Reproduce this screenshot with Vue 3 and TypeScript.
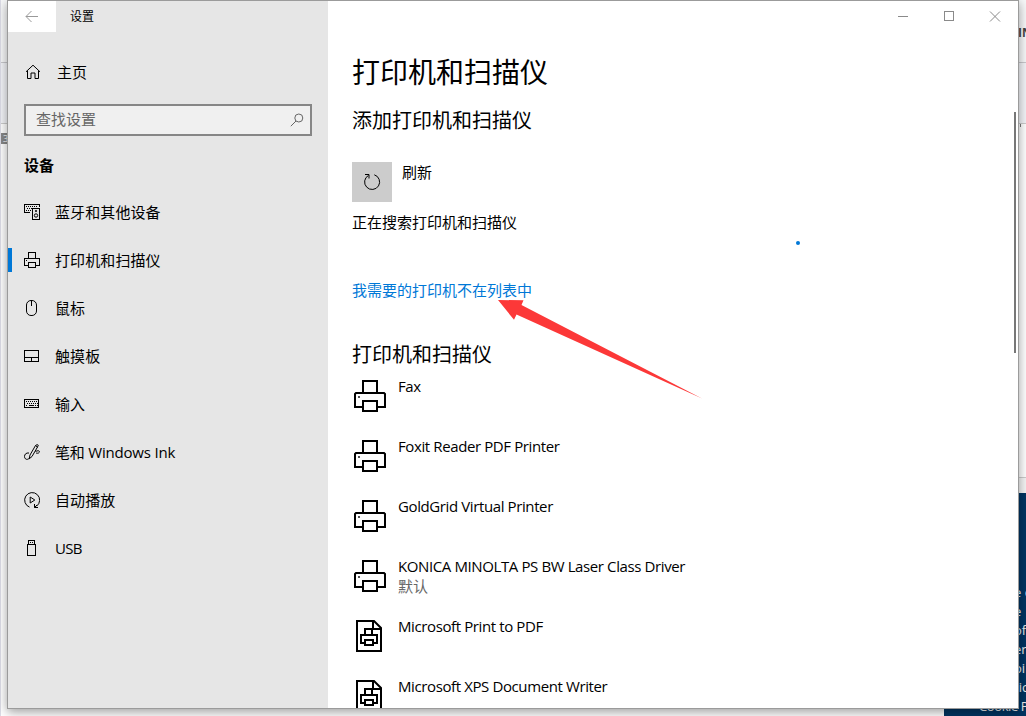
<script setup lang="ts">
interface NavItem {
  id: string
  label: string
  active?: boolean
}
interface Printer {
  name: string
  kind: 'device' | 'document'
  status?: string
}

const navItems: NavItem[] = [
  { id: 'devices', label: '蓝牙和其他设备' },
  { id: 'printer', label: '打印机和扫描仪', active: true },
  { id: 'mouse', label: '鼠标' },
  { id: 'touchpad', label: '触摸板' },
  { id: 'typing', label: '输入' },
  { id: 'pen', label: '笔和 Windows Ink' },
  { id: 'autoplay', label: '自动播放' },
  { id: 'usb', label: 'USB' },
]

const printers: Printer[] = [
  { name: 'Fax', kind: 'device' },
  { name: 'Foxit Reader PDF Printer', kind: 'device' },
  { name: 'GoldGrid Virtual Printer', kind: 'device' },
  { name: 'KONICA MINOLTA PS BW Laser Class Driver', kind: 'device', status: '默认' },
  { name: 'Microsoft Print to PDF', kind: 'document' },
  { name: 'Microsoft XPS Document Writer', kind: 'document' },
]

const footerLines: string[] = ['e c', 'e', 'of', 'er', 'oi', 'tic']
</script>

<template>
  <div class="desktop">
    <div class="page">
      <div class="page-head"><span>IN</span></div>
      <div class="page-sub"></div>
      <div class="page-body"><span class="tag">3</span><span class="tick"></span></div>
      <div class="page-band"></div>
      <div class="page-bottom">
        <div class="footer">
          <div v-for="line in footerLines" :key="line" class="footer-line">{{ line }}</div>
          <div class="footer-line cookie">Cookie P</div>
        </div>
      </div>
    </div>

    <div class="window">
      <aside class="sidebar">
        <header class="side-title">
          <div class="back">
            <svg width="14" height="14" viewBox="0 0 14 14"><path d="M1 6.500h12M6.500 1 1 6.500 6.500 12" /></svg>
          </div>
          <span>设置</span>
        </header>
        <div class="home">
          <svg width="16" height="16" viewBox="0 0 16 16"><path d="M1 7.800 8 1.200l7 6.600M2.500 6.800v7.700h3.500V9h4v5.500h3.500V6.800" /></svg>
          <span>主页</span>
        </div>
        <div class="search">
          <span>查找设置</span>
          <svg width="14" height="14" viewBox="0 0 14 14"><circle cx="8.800" cy="5" r="4" /><path d="M6 8 .8 13.200" /></svg>
        </div>
        <h3>设备</h3>
        <nav>
          <div v-for="item in navItems" :key="item.id" class="nav-item" :class="{ active: item.active }">
            <svg width="16" height="16" viewBox="0 0 16 16">
              <template v-if="item.id === 'devices'">
                <path class="crisp" d="M6 8.500H.5v-8h15V3M8.500 4.500h7v11h-7z" />
                <path class="crisp" stroke-dasharray="1 1" d="M2 2.500h12M3 4.500h5M2 6.500h5" />
                <circle cx="12" cy="11.500" r="1.700" /><circle cx="12" cy="7" r=".7" />
              </template>
              <template v-else-if="item.id === 'printer'">
                <path class="crisp" d="M4.500 6V.5h7V6M4 13.500H.5v-7h15v7H12M4.500 10.500h7v5h-7z" />
                <path class="crisp" d="M2 8.500h1" />
              </template>
              <template v-else-if="item.id === 'mouse'">
                <rect x="2.500" y=".5" width="10" height="15" rx="4.500" /><path d="M7.500 1v5" />
              </template>
              <template v-else-if="item.id === 'touchpad'">
                <path class="crisp" d="M.5 2.500h14v11H.5zM.5 9.500h14M7.500 9.500v4" />
              </template>
              <template v-else-if="item.id === 'typing'">
                <path class="crisp" d="M.5 3.500h14v8H.5z" />
                <path class="crisp" stroke-dasharray="1 1" d="M2 5.500h12M3 7.500h11M2 9.500h2M11 9.500h3" />
                <path class="crisp" d="M5 9.500h5" />
              </template>
              <template v-else-if="item.id === 'pen'">
                <path d="M5.200 14.800 6 11 11.500 1.500Q13.500-.2 14.300 1.200L13.500 3 8 12.500zM11.500 1.500l2 1.700M5 9C2 8.500.5 10.500.5 12.500c0 2 1.500 3.200 3 2.800 1-.3 1.700-1 1.700-1M11.500 7.500c3-1.500 4.500-.5 3.800.8-.7 1.200-2.300 1-3.300.7" />
              </template>
              <template v-else-if="item.id === 'autoplay'">
                <path d="M5.500 15.100A7.500 7.500 0 1 1 12.500 14.200M10.500 12v3.500H14M10.500 15.500 13 13" />
                <path d="M6.200 5v6l4.600-3z" />
              </template>
              <template v-else>
                <path class="crisp" d="M4.500 4.500v-4h6v4M3.500 4.500h8v11h-8zM6 2.500h1M8 2.500h1" />
              </template>
            </svg>
            <span>{{ item.label }}</span>
          </div>
        </nav>
      </aside>

      <main>
        <div class="controls">
          <svg width="102" height="11" viewBox="0 0 102 11">
            <path class="crisp" d="M0 5.500h10M46.500.5h9v9h-9z" />
            <path d="m92 .5 10 10m0-10-10 10" />
          </svg>
        </div>
        <h1>打印机和扫描仪</h1>
        <h2>添加打印机和扫描仪</h2>
        <div class="refresh">
          <div class="refresh-button">
            <svg width="18" height="18" viewBox="0 0 18 18"><path d="M11.300 1.800A7.500 7.500 0 1 1 5.500 2.400M2 1.500h4v4" /></svg>
          </div>
          <span>刷新</span>
        </div>
        <div class="searching">正在搜索打印机和扫描仪<i class="progress-dot"></i></div>
        <a class="link">我需要的打印机不在列表中</a>
        <h2 class="list-title">打印机和扫描仪</h2>
        <ul>
          <li v-for="p in printers" :key="p.name">
            <svg width="32" height="32" viewBox="0 0 32 32">
              <template v-if="p.kind === 'device'">
                <path d="M9 12V1h14v11M8 27H1V14l1-1h28l1 1v13h-7M9 21h14v10H9z" />
                <path class="dot" d="M4 17h2" />
              </template>
              <template v-else>
                <path d="M3 1h17l7 7v23H3zM19 1v8h8" />
                <path d="M11 16V9h7v7M10 23H7v-8h16v8h-4M11 20h8v5h-8z" />
              </template>
            </svg>
            <div class="printer-text">
              <span>{{ p.name }}</span>
              <small v-if="p.status">{{ p.status }}</small>
            </div>
          </li>
        </ul>
        <div class="scrollbar"></div>
      </main>
    </div>

    <svg class="pointer" width="204" height="100" viewBox="0 0 204 100"><path d="M0 0 25.500.3 23.500 5 204 98.500 18.500 14.500 16 19.800z" /></svg>
  </div>
</template>

<style>
html, body { overflow: hidden; }
</style>

<style scoped>
.desktop {
  position: relative;
  width: 1026px;
  height: 716px;
  overflow: hidden;
  font-family: "Open Sans", "Noto Sans CJK SC", sans-serif;
  font-size: 15px;
  line-height: 20px;
  color: #000;
}
svg { display: block; flex: none; fill: none; stroke: #000; stroke-width: 1; }
.crisp { shape-rendering: crispEdges; }
.page { box-sizing: border-box; display: flex; flex-direction: column; height: 716px; border-left: 1px solid #dcdce6; background: #fff; }
.page-head { box-sizing: border-box; height: 63px; background: #f7f8f9; border-bottom: 1px solid #c8c8cc; padding: 24px 0 0 1017px; font-size: 12px; font-weight: 700; line-height: 17px; color: #444; white-space: nowrap; }
.page-sub { box-sizing: border-box; height: 61px; background: #f3f4f8; border-bottom: 1px solid #ccc; }
.page-body { display: flex; justify-content: space-between; height: 353px; }
.tag { width: 8px; height: 11px; margin-top: 9px; background: #888; color: #fff; font-size: 9px; line-height: 11px; padding-left: 2px; box-sizing: border-box; }
.tick { width: 1px; height: 3px; margin-right: 5px; background: #777; }
.page-band { box-sizing: border-box; width: 20px; height: 16px; margin-left: auto; border-top: 1px solid #ccc; background: #f5f5f5; }
.page-bottom { display: flex; flex: 1; justify-content: flex-end; }
.footer { box-sizing: border-box; width: 82px; height: 223px; padding-top: 90px; background: #003461; color: #eee; font-size: 13px; overflow: hidden; }
.footer-line { height: 19px; line-height: 19px; padding-left: 70px; white-space: nowrap; }
.cookie { padding-left: 35px; letter-spacing: -.4px; }

.window {
  position: absolute;
  left: 7px;
  top: 0;
  box-sizing: border-box;
  width: 1012px;
  height: 709px;
  display: flex;
  border: 1px solid #9b9b9b;
  background: #fff;
  box-shadow: 0 3px 10px rgba(0, 0, 0, .38);
  overflow: hidden;
}
.sidebar { width: 320px; background: #e6e6e6; flex: none; }
.side-title { display: flex; height: 31px; font-size: 12px; line-height: 31px; }
.back { display: flex; align-items: center; justify-content: center; width: 48px; height: 31px; margin-right: 14px; background: #fff; }
.back svg { stroke: #999; }
.home { display: flex; align-items: center; height: 24px; margin: 28px 0 0 17px; }
.home span { margin-left: 16px; }
.search { box-sizing: border-box; display: flex; align-items: center; justify-content: space-between; width: 288px; height: 32px; margin: 20px 0 0 16px; padding: 0 6px 1px 10px; border: 2px solid #868686; background: #f0f0f0; color: #666; }
.search span { margin-bottom: 2px; }
.search svg { stroke: #666; }
h3 { height: 24px; margin: 17px 0 0 16px; font-size: 15px; line-height: 24px; font-weight: 700; }
nav { margin-top: 11px; }
.nav-item { box-sizing: border-box; display: flex; align-items: center; height: 48px; padding-left: 16px; letter-spacing: .1px; background: linear-gradient(#0078d7, #0078d7) -4px 12px / 4px 24px no-repeat; }
.nav-item.active { background-position: 0 12px; }
.nav-item span { margin-left: 15px; white-space: nowrap; }
.nav-item:nth-child(6) { letter-spacing: -.2px; }
.nav-item:nth-child(8) { letter-spacing: -.7px; }

main { position: relative; display: flex; flex-direction: column; flex: 1; padding-left: 24px; overflow: hidden; }
.controls { display: flex; justify-content: flex-end; height: 22px; padding: 10px 18px 0 0; box-sizing: border-box; margin-bottom: 30px; }
.controls svg { stroke: #8a8a8a; overflow: visible; }
h1 { height: 40px; margin: 0; font-size: 28px; line-height: 40px; font-weight: 400; }
h2 { height: 28px; margin: 15px 0 0; font-size: 20px; line-height: 28px; font-weight: 400; }
.refresh { display: flex; height: 40px; margin-top: 27px; }
.refresh-button { display: flex; align-items: center; justify-content: center; width: 40px; height: 40px; background: #ccc; margin-right: 10px; }
.searching { display: flex; align-items: center; height: 24px; margin-top: 8px; }
.progress-dot { width: 4px; height: 4px; margin: 42px 0 0 279px; border-radius: 50%; background: #0078d7; }
.link { height: 24px; line-height: 24px; margin-top: 44px; color: #0078d7; }
.list-title { margin-top: 39px; }
ul { list-style: none; margin: 11px 0 0; padding: 0 0 0 2px; }
li { display: flex; height: 60px; }
li svg { stroke-width: 2; }
li .dot { stroke: #555; }
.printer-text { display: flex; flex-direction: column; margin: -4px 0 0 12px; letter-spacing: -.39px; white-space: nowrap; }
small { font-size: 15px; color: #666; letter-spacing: 0; }
.scrollbar { position: absolute; right: 2px; top: 111px; width: 2px; height: 241px; background: #777; }
.pointer { position: absolute; left: 498px; top: 300px; }
.pointer path { fill: #fc3838; stroke: none; }
</style>
